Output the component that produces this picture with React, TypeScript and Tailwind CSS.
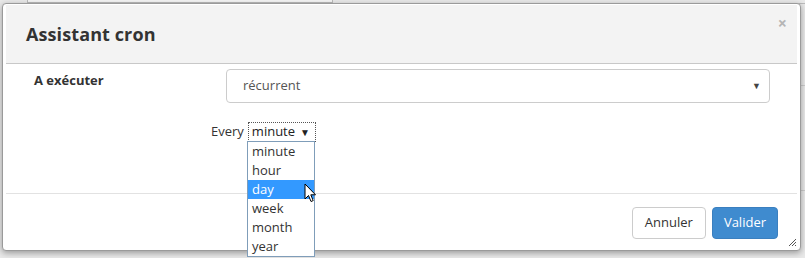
import React from "react";

const font = { fontFamily: '"Open Sans", "Noto Sans", sans-serif' };

function Cursor() {
  return (
    <svg width="13" height="21" viewBox="0 0 13 21" className="absolute left-[304px] top-[183px]">
      <path d="M1 1 L1 16 L4.5 12.5 L7 18.5 L9.2 17.6 L6.8 11.8 L11.5 11.8 Z" fill="#fff" stroke="#000" strokeWidth="1" strokeLinejoin="round" />
    </svg>
  );
}

export default function App() {
  const options = ["minute", "hour", "day", "week", "month", "year"];
  return (
    <div className="relative w-[805px] h-[258px] overflow-hidden bg-[#e9e9e9]" style={font}>
      {/* background page */}
      <div className="flex h-[3px] bg-[#e9e9e9]">
        <div className="ml-[27px] w-[309px] h-[10px] -mt-[7px] border border-[#bbb] bg-[#f5f5f5]" />
        <div className="ml-[255px] w-[220px] h-[4px] border-b border-[#bbb]" />
      </div>
      <div className="absolute right-0 top-[85px] w-[6px] border-t border-[#ccc]" />
      <div className="absolute right-0 top-[190px] w-[6px] border-t border-[#ccc]" />

      {/* dialog */}
      <div className="absolute left-[2px] top-[3px] w-[799px] h-[248px] bg-white border border-[#9a9a9a] rounded-[4px] shadow-[0_2px_6px_rgba(0,0,0,0.35)] flex flex-col overflow-hidden">
        <div className="h-[59px] bg-[#f3f3f3] border-b border-[#c8c8c8] flex items-center justify-between pl-[20px] pr-[10px] mx-[3px] mt-[1px]">
          <span className="text-[18px] font-bold text-[#333] tracking-[0.1px]">Assistant cron</span>
          <span className="text-[#b5b5b5] text-[16px] font-bold -mt-[22px]">×</span>
        </div>
        <div className="h-[130px] flex flex-col mx-[3px] border-b border-[#e2e2e2]">
          <div className="flex pt-[5px]">
            <div className="w-[220px] pl-[28px] pt-[2px] text-[13px] font-bold text-[#333]">A exécuter</div>
            <div className="w-[544px] h-[34px] border border-[#ccc] rounded-[4px] flex items-center justify-between pl-[16px] pr-[8px] text-[13px] text-[#555]">
              <span>récurrent</span>
              <span className="text-[9px] text-[#444]">▼</span>
            </div>
          </div>
          <div className="flex items-center pl-[205px] pt-[19px] text-[13px] text-[#333]">
            <span className="mr-[4px]">Every</span>
            <div className="w-[68px] h-[20px] border border-dotted border-[#555] flex items-center justify-between pl-[3px] pr-[5px] text-[13px] text-[#222]">
              <span>minute</span>
              <span className="text-[10px]">▼</span>
            </div>
          </div>
        </div>
        <div className="flex-1 flex justify-end items-start pt-[13px] pr-[22px] gap-[6px]">
          <div className="h-[32px] px-[12px] flex items-center border border-[#ccc] rounded-[4px] bg-white text-[13px] text-[#333]">Annuler</div>
          <div className="h-[32px] px-[11px] flex items-center border border-[#3a7fbf] rounded-[4px] bg-[#3f8bcf] text-[13px] text-white">Valider</div>
        </div>
        <svg width="9" height="9" viewBox="0 0 9 9" className="absolute right-[3px] bottom-[3px]">
          <path d="M8 1 L1 8 M8 4 L4 8 M8 7 L7 8" stroke="#555" strokeWidth="1" />
        </svg>
      </div>

      {/* open dropdown list */}
      <div className="absolute left-[247px] top-[141px] w-[68px] h-[116px] bg-white border border-[#7f9db9] flex flex-col text-[13px] text-[#333] leading-[19px]">
        {options.map((o) => (
          <div key={o} className={"pl-[4px] h-[19px] " + (o === "day" ? "bg-[#3399ff] text-white" : "")}>{o}</div>
        ))}
      </div>
      <Cursor />
    </div>
  );
}
